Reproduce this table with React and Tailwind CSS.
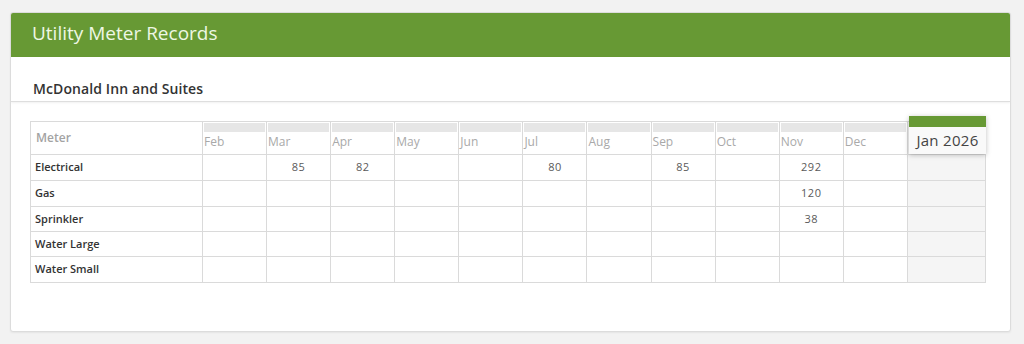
import React from "react";

const months = ["Feb", "Mar", "Apr", "May", "Jun", "Jul", "Aug", "Sep", "Oct", "Nov", "Dec"];
const rows = [
  { name: "Electrical", vals: { Mar: "85", Apr: "82", Jul: "80", Sep: "85", Nov: "292" }, h: "h-[26px]" },
  { name: "Gas", vals: { Nov: "120" }, h: "h-[26px]" },
  { name: "Sprinkler", vals: { Nov: "38" }, h: "h-[25px]" },
  { name: "Water Large", vals: {}, h: "h-[25px]" },
  { name: "Water Small", vals: {}, h: "h-[26px]" },
];

export default function App() {
  return (
    <div
      className="w-[1024px] h-[344px] bg-[#f2f2f2] pt-[12px] pl-[10px] pr-[13px] overflow-hidden"
      style={{ fontFamily: '"Open Sans", "DejaVu Sans", sans-serif' }}
    >
      <div className="h-[320px] bg-white border border-[#dcdcdc] rounded-[3px] shadow-[0_1px_2px_rgba(0,0,0,0.06)] flex flex-col overflow-hidden">
        <div className="h-[44px] bg-[#679934] flex items-center pl-[21px] pb-[3px] shrink-0">
          <span className="text-[19px] text-[#eef7e4] leading-none">Utility Meter Records</span>
        </div>
        <div className="h-[45px] shrink-0 border-b border-[#dedede] shadow-[0_1px_2px_rgba(0,0,0,0.06)] flex items-end pl-[22px] pb-[2px]">
          <span className="text-[14px] font-semibold text-[#333] leading-[20px] tracking-[0.1px]">McDonald Inn and Suites</span>
        </div>
        <div className="pl-[19px] pt-[19px]">
          <div className="relative w-[956px]">
            <table className="w-[956px] table-fixed border-collapse text-[11px]">
              <colgroup>
                <col className="w-[172px]" />
                {months.map((m) => (
                  <col key={m} />
                ))}
                <col className="w-[78px]" />
              </colgroup>
              <thead>
                <tr className="h-[33px]">
                  <th className="border border-[#dadada] text-left align-middle pl-[5px] text-[12px] font-semibold text-[#a3a3a3]">
                    Meter
                  </th>
                  {months.map((m) => (
                    <th key={m} className="border border-[#dadada] p-0 align-top text-left font-normal">
                      <div className="mx-[1px] mt-[1px] h-[9px] bg-[#e6e6e6]" />
                      <div className="pl-[1px] pt-[1px] text-[12px] leading-[18px] text-[#a9a9a9]">{m}</div>
                    </th>
                  ))}
                  <th className="border border-[#dadada] bg-[#f5f5f5] p-0"></th>
                </tr>
              </thead>
              <tbody>
                {rows.map((r) => (
                  <tr key={r.name} className={r.h}>
                    <td className="border border-[#dadada] pl-[4px] font-semibold text-[#333] text-[11px]">{r.name}</td>
                    {months.map((m) => (
                      <td key={m} className="border border-[#dadada] text-center text-[11px] text-[#5a5a5a] tracking-[0.5px]">
                        {r.vals[m] || ""}
                      </td>
                    ))}
                    <td className="border border-[#dadada] bg-[#f5f5f5]"></td>
                  </tr>
                ))}
              </tbody>
            </table>
            <div className="absolute left-[879px] top-[-5px] w-[77px] h-[38px] bg-[#f9f9f9] shadow-[0_1px_5px_rgba(0,0,0,0.25)] flex flex-col">
              <div className="h-[11px] bg-[#679934]" />
              <div className="flex-1 flex items-center justify-center text-[15px] text-[#444] tracking-[0.3px]">Jan 2026</div>
            </div>
          </div>
        </div>
      </div>
    </div>
  );
}
